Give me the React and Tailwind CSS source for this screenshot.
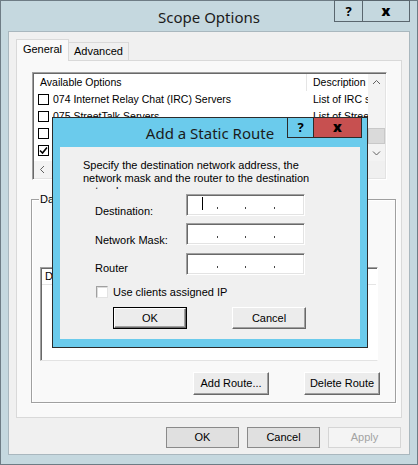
import React from "react";

function Chevron({ dir = "up", className = "" }) {
  const d = {
    up: "M1 5 L4.5 1.5 L8 5",
    down: "M1 1.5 L4.5 5 L8 1.5",
    left: "M5 1 L1.5 4.5 L5 8",
  }[dir];
  const w = dir === "left" ? 7 : 9;
  const h = dir === "left" ? 9 : 7;
  return (
    <svg width={w} height={h} viewBox={`0 0 ${w} ${h}`} className={className}>
      <path d={d} fill="none" stroke="#606060" strokeWidth="1" />
    </svg>
  );
}

function ListCheck({ checked }) {
  return (
    <div className="w-[11px] h-[11px] border border-black bg-white shrink-0 flex items-center justify-center">
      {checked && (
        <svg width="9" height="9" viewBox="0 0 9 9">
          <path d="M1 4.5 L3.5 7 L8 1.5" fill="none" stroke="#000" strokeWidth="1.6" />
        </svg>
      )}
    </div>
  );
}

function Btn3D({ children, className = "", isDefault = false }) {
  const inner = (
    <div
      className={`flex items-center justify-center bg-[#ececec] border border-t-white border-l-white border-r-[#696969] border-b-[#696969] shadow-[inset_-1px_-1px_0_#a0a0a0] ${
        isDefault ? "w-full h-full" : className
      }`}
    >
      {children}
    </div>
  );
  if (isDefault) {
    return <div className={`border border-black flex ${className}`}>{inner}</div>;
  }
  return inner;
}

function WinBtn({ children, disabled = false }) {
  return (
    <div
      className={`w-[73px] h-[21px] flex items-center justify-center border ${
        disabled
          ? "border-[#d5d5d5] bg-[#f4f4f4] text-[#a3a3a3]"
          : "border-[#8a8a8a] bg-[#e0e0e0] text-black"
      }`}
    >
      {children}
    </div>
  );
}

function IpBox({ cursor = false }) {
  return (
    <div className="w-[119px] h-[22px] shrink-0 bg-white border border-t-[#a0a0a0] border-l-[#a0a0a0] border-r-white border-b-white shadow-[inset_1px_1px_0_#696969,inset_-1px_-1px_0_#e3e3e3] flex items-start">
      {cursor ? (
        <>
          <div className="w-[15px] shrink-0" />
          <div className="w-px h-[13px] mt-[2px] bg-black shrink-0" />
          <div className="w-[14px] shrink-0" />
        </>
      ) : (
        <div className="w-[30px] shrink-0" />
      )}
      <div className="w-px h-[2px] mt-[12px] bg-[#444] shrink-0" />
      <div className="w-[27px] shrink-0" />
      <div className="w-px h-[2px] mt-[12px] bg-[#444] shrink-0" />
      <div className="w-[28px] shrink-0" />
      <div className="w-px h-[2px] mt-[12px] bg-[#444] shrink-0" />
    </div>
  );
}

const rows = [
  { c: false, name: "074 Internet Relay Chat (IRC) Servers", desc: "List of IRC servers available" },
  { c: false, name: "075 StreetTalk Servers", desc: "List of StreetTalk servers" },
  { c: false, name: "076 StreetTalk Directory Assistance (STDA) Servers", desc: "List of STDA servers" },
  { c: true, name: "121 Classless Static Routes", desc: "Destination, mask and router" },
  { c: false, name: "249 Classless Static Routes", desc: "Destination, mask" },
];

export default function App() {
  return (
    <div className="w-[418px] h-[465px] font-['Liberation_Sans',Arial,sans-serif] text-[11px] leading-[13px] text-black">
      <div className="relative w-[418px] h-[465px] bg-[#c5d8df] border border-[#6e7c85] flex flex-col">
        {/* Title bar */}
        <div className="relative h-[30px] shrink-0 flex items-center justify-center pt-[1px]">
          <span className="font-['Noto_Sans',sans-serif] text-[15px] leading-[18px] text-[#1b1b1b]">
            Scope Options
          </span>
          <div className="absolute -top-px right-[7px] flex">
            <div className="w-[29px] h-[22px] border border-[#5a666e] flex items-center justify-center font-['Noto_Sans',sans-serif] text-[13px] font-bold">
              ?
            </div>
            <div className="w-[47px] h-[22px] border border-l-0 border-[#5a666e] flex items-center justify-center font-['Noto_Sans',sans-serif] text-[14px] font-black pb-[2px]">
              x
            </div>
          </div>
        </div>

        {/* Client */}
        <div className="ml-[7px] w-[402px] h-[424px] shrink-0 bg-[#f0f0f0] border border-[#a9b7be] flex flex-col">
          {/* Tabs */}
          <div className="flex items-end pl-[7px] pt-[7px] h-[28px] shrink-0">
            <div className="relative z-10 -mb-px w-[53px] h-[22px] bg-[#f9f9f9] border border-b-0 border-t-[#d9d9d9] border-l-[#d9d9d9] border-r-[#d9d9d9] flex items-start justify-center pt-[3px]">
              General
            </div>
            <div className="w-[60px] h-[18px] bg-[#f0f0f0] border border-b-0 border-l-0 border-[#d9d9d9] flex items-start justify-center pt-[2px]">
              Advanced
            </div>
          </div>

          {/* Panel */}
          <div className="ml-[7px] w-[386px] h-[358px] shrink-0 bg-[#f9f9f9] border border-[#d9d9d9] flex flex-col">
            {/* Options list */}
            <div className="ml-[15px] mt-[11px] w-[355px] h-[108px] shrink-0 bg-white border border-t-[#a0a0a0] border-l-[#a0a0a0] border-r-white border-b-white shadow-[inset_1px_1px_0_#696969,inset_-1px_-1px_0_#e3e3e3] p-px flex flex-col text-[10.5px]">
              <div className="flex h-[87px] shrink-0">
                <div className="w-[334px] overflow-hidden flex flex-col">
                  <div className="flex h-[17px] shrink-0 items-center">
                    <div className="w-[272px] shrink-0 pl-[6px]">Available Options</div>
                    <div className="w-px h-[17px] bg-[#e5e5e5] shrink-0" />
                    <div className="pl-[6px] whitespace-nowrap">Description</div>
                  </div>
                  {rows.map((r, i) => (
                    <div key={i} className="flex h-[17px] shrink-0 items-center whitespace-nowrap">
                      <div className="w-[272px] shrink-0 pl-[4px] flex items-center gap-[4px] overflow-hidden">
                        <ListCheck checked={r.c} />
                        <span>{r.name}</span>
                      </div>
                      <div className="w-px shrink-0" />
                      <div className="pl-[6px]">{r.desc}</div>
                    </div>
                  ))}
                </div>
                <div className="w-[17px] shrink-0 bg-[#f3f3f3] flex flex-col">
                  <div className="h-[16px] flex items-center justify-center">
                    <Chevron dir="up" />
                  </div>
                  <div className="h-[38px]" />
                  <div className="h-[16px] bg-[#dadada] border border-[#c8c8c8]" />
                  <div className="h-px" />
                  <div className="h-[16px] flex items-center justify-center">
                    <Chevron dir="down" />
                  </div>
                </div>
              </div>
              <div className="flex h-[17px] shrink-0">
                <div className="w-[334px] bg-[#f3f3f3] flex">
                  <div className="w-[16px] flex items-center justify-center">
                    <Chevron dir="left" />
                  </div>
                </div>
                <div className="w-[17px] bg-[#f0f0f0]" />
              </div>
            </div>

            {/* Group box */}
            <div className="ml-[14px] mt-[19px] w-[365px] h-[204px] shrink-0 border border-[#a0a0a0] shadow-[1px_1px_0_#fff,inset_1px_1px_0_#fff] flex flex-col">
              <div className="self-start -mt-[7px] ml-[7px] px-px bg-[#f9f9f9] leading-[13px]">Data entry</div>
              <div className="ml-[8px] mt-[61px] w-[338px] h-[94px] shrink-0 bg-white border border-t-[#a0a0a0] border-l-[#a0a0a0] border-r-white border-b-[#e3e3e3] shadow-[inset_1px_1px_0_#696969] p-px flex flex-col">
                <div className="h-[16px] border-b border-[#e5e5e5] flex items-center pl-[3px]">
                  <span className="w-[110px]">Destination</span>
                  <span className="w-[110px]">Network mask</span>
                  <span>Router</span>
                </div>
              </div>
              <div className="flex mt-[11px] ml-[161px] gap-[35px]">
                <Btn3D className="w-[76px] h-[23px]">Add Route...</Btn3D>
                <Btn3D className="w-[76px] h-[23px]">Delete Route</Btn3D>
              </div>
            </div>
          </div>

          {/* Bottom buttons */}
          <div className="mt-[9px] flex justify-end gap-[8px] pr-[8px]">
            <WinBtn>OK</WinBtn>
            <WinBtn>Cancel</WinBtn>
            <WinBtn disabled>Apply</WinBtn>
          </div>
        </div>

        {/* Add a Static Route dialog */}
        <div className="absolute left-[51px] top-[116px] w-[316px] h-[231px] bg-[#6bcbec] border border-[#2b2b2b] flex flex-col">
          <div className="relative h-[29px] shrink-0 flex items-center justify-center pt-[1px]">
            <span className="font-['Noto_Sans',sans-serif] text-[15px] leading-[18px] text-[#1b1b1b]">
              Add a Static Route
            </span>
            <div className="absolute -top-px right-[5px] flex">
              <div className="w-[27px] h-[21px] border border-[#2b2b2b] flex items-center justify-center font-['Noto_Sans',sans-serif] text-[13px] font-bold">
                ?
              </div>
              <div className="w-[48px] h-[21px] border border-l-0 border-[#2b2b2b] bg-[#c75050] flex items-center justify-center font-['Noto_Sans',sans-serif] text-[14px] font-black pb-[2px]">
                x
              </div>
            </div>
          </div>
          <div className="ml-[7px] w-[300px] h-[192px] shrink-0 bg-[#f0f0f0] flex flex-col">
            <div className="mt-[12px] ml-[23px] h-[30px] overflow-hidden leading-[13px] whitespace-nowrap">
              <div>Specify the destination network address, the</div>
              <div>network mask and the router to the destination</div>
              <div>network.</div>
            </div>

            <div className="mt-[5px] flex h-[22px] items-start">
              <div className="ml-[35px] w-[91px] pt-[11px]">Destination:</div>
              <IpBox cursor />
            </div>
            <div className="mt-[7px] flex h-[22px] items-start">
              <div className="ml-[35px] w-[91px] pt-[11px]">Network Mask:</div>
              <IpBox />
            </div>
            <div className="mt-[8px] flex h-[22px] items-start">
              <div className="ml-[35px] w-[91px] pt-[9px]">Router</div>
              <IpBox />
            </div>

            <div className="mt-[11px] ml-[36px] flex items-center h-[12px]">
              <div className="w-[12px] h-[12px] bg-white border border-t-[#a0a0a0] border-l-[#a0a0a0] border-r-[#e3e3e3] border-b-[#e3e3e3] shadow-[inset_1px_1px_0_#dcdcdc]" />
              <span className="ml-[5px]">Use clients assigned IP</span>
            </div>

            <div className="mt-[9px] ml-[53px] flex gap-[45px]">
              <Btn3D isDefault className="w-[74px] h-[22px]">OK</Btn3D>
              <Btn3D className="w-[74px] h-[22px]">Cancel</Btn3D>
            </div>
          </div>
        </div>
      </div>
    </div>
  );
}
